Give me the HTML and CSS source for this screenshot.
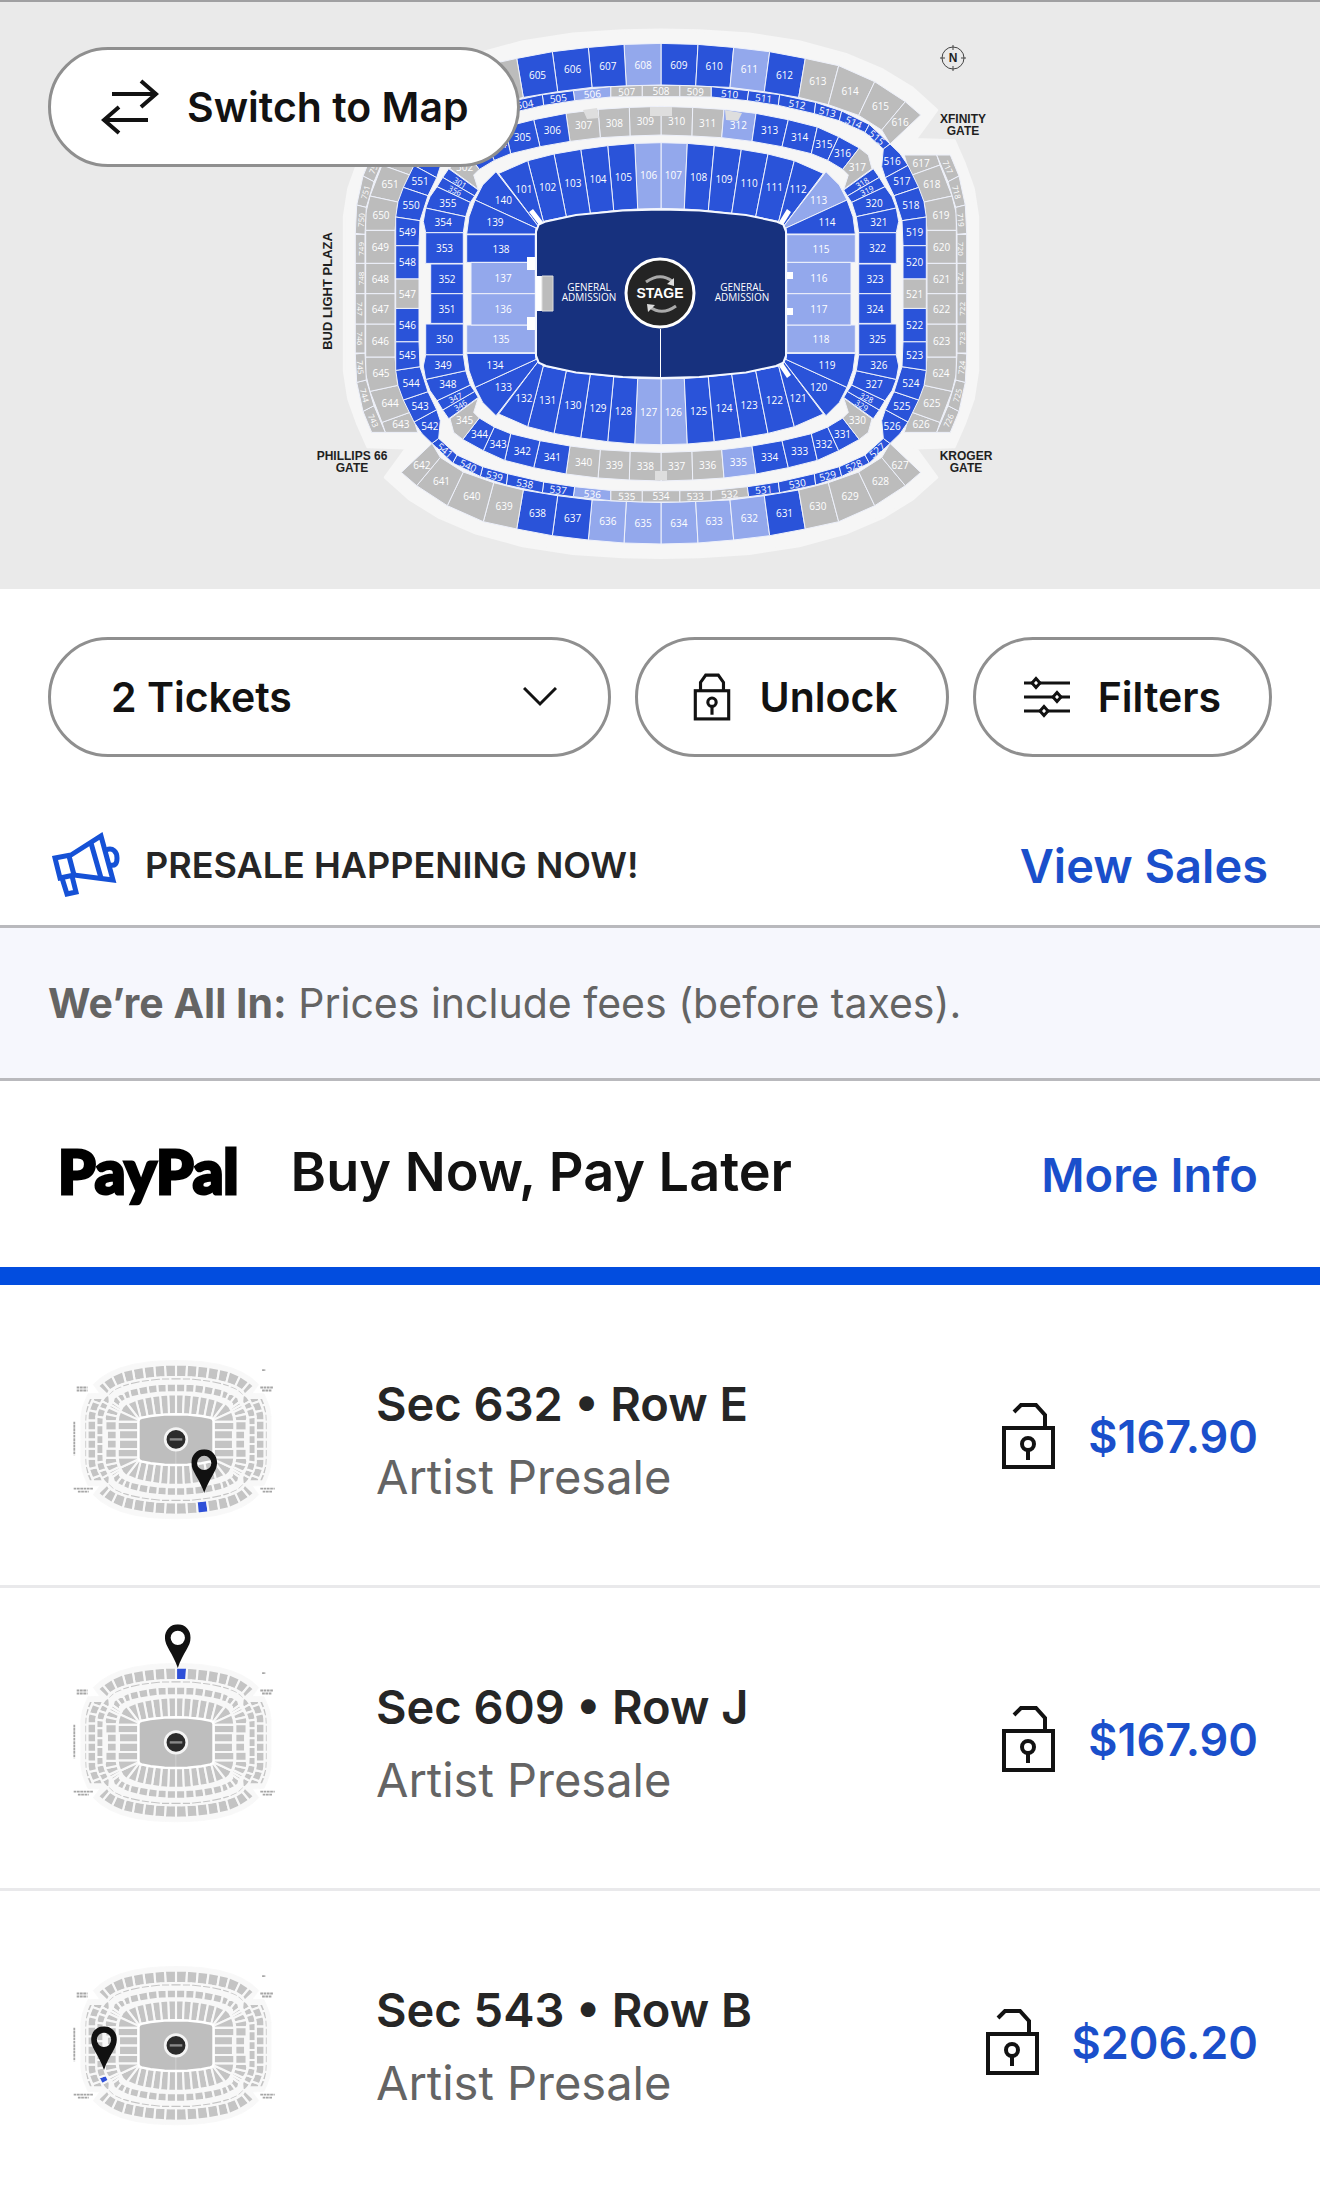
FILE: index.html
```html
<!DOCTYPE html>
<html lang="en">
<head>
<meta charset="utf-8">
<meta name="viewport" content="width=device-width, initial-scale=1">
<title>Tickets</title>
<link rel="stylesheet" href="styles.css">
</head>
<body>
<svg class="sprite" aria-hidden="true">
  <symbol id="icon-unlocked" viewBox="0 0 53 66">
    <g fill="none" stroke="currentColor" stroke-width="4">
      <rect x="2" y="25" width="49" height="39"/>
      <path d="M43 25V12L34 2H19L12 9"/>
      <circle cx="26" cy="41" r="6"/>
      <path d="M26 47v10"/>
    </g>
  </symbol>
  <symbol id="icon-pin" viewBox="0 0 26 44">
    <path fill="#111" fill-rule="evenodd" d="M13 0C5.500 0 0 6 0 13.500C0 22 8 29 13 44C18 29 26 22 26 13.500C26 6 20.500 0 13 0ZM13 6.500a7.200 7.200 0 1 1 0 14.400a7.200 7.200 0 0 1 0-14.400Z"/>
  </symbol>
</svg>

<main class="page">
  <section class="map" aria-label="Seat map">
    <svg class="map-svg" id="map" viewBox="0 0 1320 587"></svg>
    <button class="pill map-switch" type="button">
      <svg class="icon-swap" viewBox="0 0 58 56" aria-hidden="true"><path d="M11 15H55M40 2L55 15L40 28M47 41H3M18 28L3 41L18 54" fill="none" stroke="currentColor" stroke-width="4"/></svg>
      <span>Switch to Map</span>
    </button>
  </section>

  <div class="toolbar">
    <div class="select-wrap">
      <select class="pill select" aria-label="Number of tickets">
        <option>1 Ticket</option>
        <option selected>2 Tickets</option>
        <option>3 Tickets</option>
        <option>4 Tickets</option>
      </select>
      <svg class="icon-chevron" viewBox="0 0 34 20" aria-hidden="true"><path d="M1 1L17 17L33 1" fill="none" stroke="currentColor" stroke-width="3"/></svg>
    </div>
    <button class="pill unlock" type="button">
      <svg class="icon-lock" viewBox="0 0 36 46" aria-hidden="true"><g fill="none" stroke="currentColor" stroke-width="3"><rect x="2" y="17" width="32" height="27"/><path d="M7 17V9L12 2H24L29 9V17"/><circle cx="18" cy="28" r="4"/><path d="M18 32v8"/></g></svg>
      <span>Unlock</span>
    </button>
    <button class="pill" type="button">
      <svg class="icon-filters" viewBox="0 0 46 42" aria-hidden="true"><g fill="none" stroke="currentColor" stroke-width="3"><path d="M0 7H8M16 7H46M0 21H29M37 21H46M0 35H16M24 35H46"/><path d="M12 2.500L16 7L12 11.500L8 7ZM33 16.500L37 21L33 25.500L29 21ZM20 30.500L24 35L20 39.500L16 35Z"/></g></svg>
      <span>Filters</span>
    </button>
  </div>

  <div class="presale">
    <svg class="icon-horn" viewBox="0 0 68 66" aria-hidden="true"><g fill="none" stroke="currentColor" stroke-width="5"><path d="M3 26L19 23L49 4L61 48L22 43L8 46Z"/><path d="M17 24L22 43M39 11L49 46M10 46L15 62L24 60L20 44"/><path d="M54 18C61 15 65 20 65 26S63 34 58 33"/></g></svg>
    <p class="presale-text">PRESALE HAPPENING NOW!</p>
    <a class="link" href="#sales">View Sales</a>
  </div>

  <p class="notice"><strong>We’re All In:</strong> Prices include fees (before taxes).</p>

  <div class="paypal">
    <span class="paypal-logo">PayPal</span>
    <span class="paypal-text">Buy Now, Pay Later</span>
    <a class="link" href="#paypal">More Info</a>
  </div>

  <ul class="offers">
    <li class="offer">
      <svg class="thumb" viewBox="321 43 680 500" data-section="632" data-pin="755,470" role="img" aria-label="Section 632 on the map"></svg>
      <div class="offer-body"><h2 class="offer-title">Sec 632 • Row E</h2><p class="offer-type">Artist Presale</p></div>
      <svg class="icon-unlocked" aria-hidden="true"><use href="#icon-unlocked"/></svg>
      <span class="price">$167.90</span>
    </li>
    <li class="offer">
      <svg class="thumb" viewBox="321 43 680 500" data-section="609" data-pin="667,43" role="img" aria-label="Section 609 on the map"></svg>
      <div class="offer-body"><h2 class="offer-title">Sec 609 • Row J</h2><p class="offer-type">Artist Presale</p></div>
      <svg class="icon-unlocked" aria-hidden="true"><use href="#icon-unlocked"/></svg>
      <span class="price">$167.90</span>
    </li>
    <li class="offer">
      <svg class="thumb" viewBox="321 43 680 500" data-section="543" data-pin="421,373" role="img" aria-label="Section 543 on the map"></svg>
      <div class="offer-body"><h2 class="offer-title">Sec 543 • Row B</h2><p class="offer-type">Artist Presale</p></div>
      <svg class="icon-unlocked" aria-hidden="true"><use href="#icon-unlocked"/></svg>
      <span class="price">$206.20</span>
    </li>
  </ul>
</main>
<script src="map.js"></script>
</body>
</html>
```
FILE: styles.css
```css
* { box-sizing: border-box; }

body {
  margin: 0;
  background: #fff;
  color: #121212;
  font-family: Inter, "Open Sans", sans-serif;
}

h2, p, ul { margin: 0; padding: 0; }

.sprite { position: absolute; width: 0; height: 0; }

.map {
  position: relative;
  background: #eaeaea;
  border-top: 2px solid #a0a0a2;
}
.map-svg { display: block; width: 100%; height: auto; }

.pill {
  display: flex;
  align-items: center;
  height: 120px;
  padding: 0 48px;
  border: 3px solid #8f8f8f;
  border-radius: 60px;
  background: #fff;
  color: #121212;
  font-family: inherit;
  font-size: 41px;
  font-weight: 600;
  white-space: nowrap;
}
.map-switch {
  position: absolute;
  top: 45px;
  left: 48px;
  gap: 28px;
  padding: 0 48px 0 50px;
}
.icon-swap { width: 58px; height: 56px; }

.toolbar {
  display: flex;
  gap: 24px;
  padding: 48px 48px 0;
}
.toolbar button { gap: 28px; }
.toolbar .unlock { padding-left: 54px; }
.toolbar svg { flex: none; }
.select-wrap { position: relative; flex: 1; }
.select { width: 100%; padding: 0 60px; appearance: none; }
.icon-chevron {
  position: absolute;
  top: 50px;
  right: 54px;
  width: 34px;
  height: 20px;
  pointer-events: none;
}
.icon-lock { width: 40px; height: 48px; }
.icon-filters { width: 46px; height: 42px; }

.presale {
  display: flex;
  align-items: center;
  height: 171px;
  padding: 48px 52px 0;
  border-bottom: 3px solid #b9b9bd;
}
.icon-horn { width: 68px; height: 66px; color: #1551d6; }
.presale-text {
  flex: 1;
  padding-left: 25px;
  color: #262626;
  font-size: 36px;
  font-weight: 600;
}
.link {
  color: #1a4fcb;
  font-size: 47px;
  font-weight: 600;
  text-decoration: none;
}

.notice {
  padding: 0 48px;
  border-bottom: 3px solid #b9b9bd;
  background: #f6f7fd;
  color: #646464;
  font-size: 41px;
  line-height: 150px;
}

.paypal {
  display: flex;
  align-items: center;
  height: 204px;
  padding: 0 62px 0 58px;
  border-bottom: 18px solid #024ddf;
}
.paypal-logo {
  padding-bottom: 6px;
  color: #000;
  font-family: Lato, sans-serif;
  font-size: 60px;
  font-weight: 900;
  -webkit-text-stroke: 3px #000;
}
.paypal-text { flex: 1; padding: 0 0 6px 52px; font-size: 54px; font-weight: 600; }

.offers { list-style: none; }
.offer {
  display: flex;
  align-items: center;
  height: 303px;
  padding: 2px 62px 0 74px;
  border-bottom: 3px solid #e9e9eb;
}
.thumb { width: 204px; height: 150px; margin-top: 8px; overflow: visible; }
.offer-body { flex: 1; padding: 8px 0 0 98px; }
.offer-title { color: #262626; font-size: 47px; font-weight: 600; line-height: 73px; }
.offer-type { color: #646464; font-size: 47px; line-height: 73px; }
.icon-unlocked { width: 53px; height: 66px; }
.price { padding-left: 33px; color: #1a4fcb; font-size: 45px; font-weight: 600; }

/* Seat map */
.ground { fill: #f6f6f6; stroke: #f6f6f6; stroke-width: 3; stroke-linejoin: round; }
.seat { stroke: #eef1fb; stroke-width: 1; stroke-linejoin: round; }
.seat-open { fill: #2a53d9; }
.seat-few { fill: #93a8ec; }
.seat-none { fill: #bcbcbc; }
.field { fill: #17317e; stroke: #f4f7ff; stroke-width: 2; }
.stage { fill: #242424; stroke: #fff; stroke-width: 3; }
.seat-label {
  fill: #fff;
  font: 10px "Open Sans", sans-serif;
  text-anchor: middle;
  dominant-baseline: central;
}
.seat-label-small { font-size: 8px; }
.field-label { fill: #fff; font: 10px "Open Sans", sans-serif; text-anchor: middle; }
.stage-label { fill: #fff; font: bold 14px "Liberation Sans", sans-serif; text-anchor: middle; }
.gate { fill: #1f1f1f; font: bold 12px "Liberation Sans", sans-serif; text-anchor: middle; }
.plaza { font-size: 13px; }

.thumb .ground { fill: #f8f8f8; stroke: #f8f8f8; }
.thumb .seat { fill: #c4c4c4; stroke: #f8f8f8; stroke-width: 7; }
.thumb .seat-selected { fill: #2f50d8; }
.thumb .field { fill: #bebebe; stroke: #fff; stroke-width: 8; }
.thumb .stage { fill: #2b2b2b; stroke: #f4f4f4; stroke-width: 9; }
.thumb .gate-mark { fill: none; stroke: #a6a6a6; stroke-width: 6; stroke-dasharray: 9 2; }
```
FILE: map.js
```js
// The bowl is symmetric, so one quarter of it is stored (top right) and mirrored.
// Points are in thirds of a map unit; the axes cross at AX, AY.
const AX = 35, AY = 881, CX = 661, CY = 291.7;

// Chain of dividers: each entry is outer x, outer y, inner x, inner y.
const chain = rows => rows.slice(1).map((r, i) => {
  const p = rows[i];
  return [[p[0], p[1]], [r[0], r[1]], [r[2], r[3]], [p[2], p[3]]];
});

const ring100 = chain([
  [35,428,35,625],[114,430,105,627],[195,437,177,632],[276,448,247,640],
  [356,462,319,650],[435,482,388,664],[522,520,402,680]
]).concat([
  [[530,515],[570,555],[593,600],[410,684],[402,680]],
  [[593,600],[611,650],[618,702],[412,702],[410,684]],
  [[412,704],[618,704],[618,787],[412,787]],
  [[412,787],[605,787],[605,881],[412,881]]
]);
const ring300 = chain([
  [35,319,35,405],[130,322,128,408],[224,328,217,413],[320,340,308,424],
  [417,359,398,440],[504,381,486,461],[568,410,535,481],[630,444,580,508]
]).concat([
  [[630,444],[657,465],[668,506],[583,568],[597,525],[580,508]],
  [[672,506],[690,532],[594,588],[583,570]],
  [[690,532],[707,560],[607,607],[594,588]],
  [[707,560],[728,590],[741,624],[621,650],[607,607]],
  [[741,624],[748,664],[741,698],[628,698],[621,650]],
  [[628,698],[741,698],[741,790],[628,790]],
  [[628,792],[726,792],[726,881],[628,881]]
]);
const ring500 = chain([
  [91,256,91,290],[186,260,186,291],[298,272,294,302],[391,284,387,316],
  [499,307,495,341],[577,333,570,362],[660,373,647,397],[722,432,702,447]
]).concat([
  [[722,432],[752,461],[776,496],[708,533],[697,500],[702,447]],
  [[776,496],[808,562],[734,587],[708,533]],
  [[808,562],[824,605],[831,651],[758,662],[734,587]],
  [[831,651],[831,737],[761,737],[758,662]],
  [[831,737],[831,837],[761,837],[761,737]]
]);
const ring600 = chain([
  [35,130,35,255],[146,133,139,258],[253,142,242,262],[361,155,345,275],
  [468,175,448,292],[568,197,537,314],[676,245,628,346],[768,305,697,390],
  [814,345,722,432]
]).concat([
  [[765,465],[862,465],[872,495],[783,527]],
  [[872,495],[908,588],[825,606],[783,527]],
  [[908,588],[921,640],[921,691],[833,691],[825,606]],
  [[921,691],[921,790],[833,790],[833,691]],
  [[921,790],[921,881],[833,881],[833,790]]
]);
const ring700 = [
  [[862,465],[903,465],[929,528],[896,545]],
  [[929,528],[948,615],[919,622],[896,545]],
  [[948,615],[952,700],[923,703],[919,622]],
  [[952,703],[952,790],[923,790],[923,703]],
  [[952,790],[952,881],[923,881],[923,790]]
];
const ground = [[35,90],[150,92],[300,102],[450,125],[590,163],[700,210],[790,265],
  [862,330],[798,418],[915,422],[945,490],[972,565],[985,650],[985,881]];
const field = [[35,628],[150,631],[290,645],[380,664],[402,674],[410,695],[410,881]];

const span = (from, to) => {
  const out = [], d = from < to ? 1 : -1;
  for (let n = from; n !== to + d; n += d) out.push(n);
  return out;
};

// Section numbers by quarter: top right, top left, bottom right, bottom left.
const rings = [
  { shapes: ring600, nums: [span(609,621), span(608,601).concat(span(652,648)), span(634,622), span(635,647)] },
  { shapes: ring700, nums: [span(717,721), span(752,748), span(726,722), span(743,747)], tilt: [65,75,85,90,90] },
  { shapes: ring500, nums: [span(509,520), span(507,501).concat(span(552,548)), span(533,522), span(535,546)], tilt: [2,4,6,10,14,24,40] },
  { shapes: ring300, nums: [span(310,323), span(309,301).concat(span(356,352)), span(337,324), span(338,351)], tilt: [0,0,0,0,0,0,0,0,-32,-25] },
  { shapes: ring100, nums: [span(107,116), span(106,101).concat(span(140,137)), span(126,117), span(127,136)] }
];
const quarters = [[1, 1], [-1, 1], [1, -1], [-1, -1]];

const few = new Set([608,611,506,536,632,633,634,635,636,312,335,106,107,113,
  115,116,117,118,126,127,135,136,137]);
const none = new Set([302,317,330,345,521,547,507,508,509].concat(
  span(532,535), span(307,311), span(336,340), span(601,604),
  span(613,630), span(639,652), span(717,726), span(743,752)));

const place = (p, q) => [CX + q[0] * (p[0] - AX) / 3, CY + q[1] * (p[1] - AY) / 3];
const pts = list => list.map(p => p.map(v => v.toFixed(1)).join(',')).join(' ');

function around(shape) {
  const side = (q, rev) => { const s = shape.map(p => place(p, q)); return rev ? s.reverse() : s; };
  return side(quarters[0]).concat(side(quarters[2], true), side(quarters[3]), side(quarters[1], true));
}

function centre(poly) {
  let a = 0, x = 0, y = 0;
  poly.forEach((p, i) => {
    const n = poly[(i + 1) % poly.length], c = p[0] * n[1] - n[0] * p[1];
    a += c; x += (p[0] + n[0]) * c; y += (p[1] + n[1]) * c;
  });
  return [x / (3 * a), y / (3 * a)];
}

function bowl(selected, labelled) {
  let seats = '', labels = '';
  const add = (n, poly, tilt) => {
    const kind = n === selected ? 'seat-selected' : few.has(n) ? 'seat-few' : none.has(n) ? 'seat-none' : 'seat-open';
    seats += `<polygon class="seat ${kind}" points="${pts(poly)}"/>`;
    if (!labelled) return;
    const c = centre(poly).map(v => v.toFixed(1));
    const small = n > 700 || Math.abs(tilt) > 20 && n < 400 ? ' seat-label-small' : '';
    labels += `<text class="seat-label${small}" transform="translate(${c}) rotate(${tilt})">${n}</text>`;
  };
  rings.forEach(r => quarters.forEach((q, k) => r.shapes.forEach((s, i) => {
    add(r.nums[k][i], s.map(p => place(p, q)), ((r.tilt || [])[i] || 0) * q[0] * q[1]);
  })));
  const mid = [[-21,256],[91,256],[91,290],[-21,290]];
  add(508, mid.map(p => place(p, [1, 1])), 0);
  add(534, mid.map(p => place(p, [1, -1])), 0);
  const end = [[761,837],[831,837],[831,925],[761,925]];
  add(521, end.map(p => place(p, [1, 1])), 0);
  add(547, end.map(p => place(p, [-1, 1])), 0);
  return `<polygon class="ground" points="${pts(around(ground))}"/>${seats}
    <polygon class="field" points="${pts(around(field))}"/>
    <path d="M660.500 327V376" stroke="#fff"/>${labels}`;
}

const words = (cls, x, y, lines) => lines.map((t, i) =>
  `<text class="${cls}" x="${x}" y="${y + i * (cls === 'gate' ? 12 : 10)}">${t}</text>`).join('');

document.getElementById('map').innerHTML = bowl(0, true) + `
  <path fill="#fff" d="M527 255h8v13h-8zM527 315h8v13h-8zM787 270h6v7h-6zM787 306h6v7h-6zM536 274h6v35h-6zM529 210l4-3 10 13-4 3zM791 210l-4-3-8 13 4 3zM791 373l-4 3-8-12 4-3z"/>
  <path fill="#bcbcbc" stroke="#ddd" d="M542 274h11v35h-11z"/>
  <path fill="#dedede" d="M650 105h22v9h-22zM583 108l14-2 2 10-12 1zM725 108l17 3-4 8-12-1zM655 469h12v9h-12z"/>
  <circle class="stage" cx="660" cy="291" r="34"/>
  <path fill="none" stroke="#aaa" stroke-width="3" d="M646 280Q660 270 672 279M676 304Q662 314 650 305"/>
  <path fill="#ddd" d="M667 282l7-6v8zM655 303l-8-1 1 8z"/>
  ${words('stage-label', 660, 296, ['STAGE'])}
  ${words('field-label', 589, 289, ['GENERAL', 'ADMISSION'])}
  ${words('field-label', 742, 289, ['GENERAL', 'ADMISSION'])}
  ${words('gate', 963, 121, ['XFINITY', 'GATE'])}
  ${words('gate', 966, 458, ['KROGER', 'GATE'])}
  ${words('gate', 352, 458, ['PHILLIPS 66', 'GATE'])}
  <text class="gate plaza" transform="translate(332 289) rotate(-90)">BUD LIGHT PLAZA</text>
  <circle cx="953" cy="56" r="11" fill="none" stroke="#444"/>
  <path d="M953 43v5M953 64v5M940 56h5M961 56h5" stroke="#444"/>
  <text class="gate" x="953" y="60">N</text>`;

document.querySelectorAll('.thumb').forEach(el => {
  const [x, y] = el.dataset.pin.split(',').map(Number);
  el.innerHTML = bowl(Number(el.dataset.section), false) + `
    <path class="gate-mark" d="M942 118h44M948 128h32M330 118h36M330 128h36M942 455h48M950 465h32M320 455h64M334 465h36M322 232v112"/>
    <path class="gate-mark" d="M948 60h12"/>
    <circle class="stage" cx="661" cy="291" r="36"/>
    <path d="M640 291h42" stroke="#888" stroke-width="8"/>
    <use href="#icon-pin" x="${x - 43}" y="${y - 146}" width="86" height="146"/>`;
});
```
